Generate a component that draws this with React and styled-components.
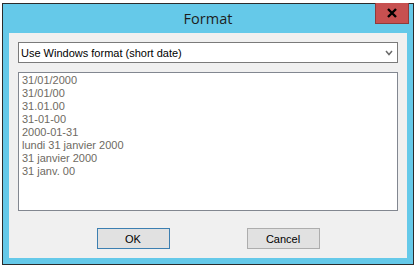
import React from 'react';
import styled, { createGlobalStyle } from 'styled-components';

const GlobalStyle = createGlobalStyle`
    html, body {
        margin: 0;
        padding: 0;
        background: #ffffff;
    }
    body {
        font-family: "Liberation Sans", Arial, sans-serif;
        font-size: 11px;
    }
`;

const Page = styled.div`
    padding: 3px 0 0 2px;
    width: 416px;
    height: 269px;
    box-sizing: border-box;
`;

const Window = styled.div`
    position: relative;
    width: 412px;
    height: 262px;
    box-sizing: border-box;
    border: 1px solid #2b2b2b;
    background: #65c9e9;
    display: flex;
    flex-direction: column;
    padding: 0 6px 6px 6px;
`;

const TitleBar = styled.div`
    height: 29px;
    display: flex;
    align-items: center;
    justify-content: center;
    font-family: "Open Sans", "Noto Sans", sans-serif;
    font-size: 14.5px;
    color: #1e1e1e;
    padding-bottom: 1px;
    box-sizing: border-box;
`;

const CloseButton = styled.div`
    position: absolute;
    top: -1px;
    right: 4px;
    width: 34px;
    height: 21px;
    box-sizing: border-box;
    background: #c75050;
    border: 1px solid #8f3a3a;
    border-top: none;
    display: flex;
    align-items: center;
    justify-content: center;
`;

const Client = styled.div`
    flex: 1;
    background: #f0f0f0;
    padding: 9px 9px 0 9px;
    display: flex;
    flex-direction: column;
`;

const Combo = styled.div`
    height: 21px;
    box-sizing: border-box;
    border: 1px solid #7a7a7a;
    background: #ffffff;
    display: flex;
    align-items: center;
    justify-content: space-between;
    padding: 0 4px 0 2px;
    color: #000000;
`;

const ListBox = styled.div`
    margin-top: 9px;
    height: 139px;
    box-sizing: border-box;
    border: 1px solid #828790;
    background: #ffffff;
    padding: 1px 3px;
`;

const Item = styled.div`
    height: 13px;
    line-height: 13px;
    color: #6e6a62;
    white-space: nowrap;
`;

const ButtonRow = styled.div`
    margin-top: 17px;
    display: flex;
    justify-content: center;
    gap: 77px;
`;

const Button = styled.div`
    width: 73px;
    height: 21px;
    box-sizing: border-box;
    background: #e1e1e1;
    border: 1px solid ${p => (p.$default ? '#3c7fb1' : '#adadad')};
    display: flex;
    align-items: center;
    justify-content: center;
    color: #000000;
`;

const formats = [
    '31/01/2000',
    '31/01/00',
    '31.01.00',
    '31-01-00',
    '2000-01-31',
    'lundi 31 janvier 2000',
    '31 janvier 2000',
    '31 janv. 00',
];

export default function App() {
    return (
        <Page>
            <GlobalStyle />
            <Window>
                <TitleBar>Format</TitleBar>
                <CloseButton>
                    <svg width="12" height="10" viewBox="0 0 12 10">
                        <path d="M2 1 L10 9 M10 1 L2 9" stroke="#000" strokeWidth="2.4" />
                    </svg>
                </CloseButton>
                <Client>
                    <Combo>
                        <span>Use Windows format (short date)</span>
                        <svg width="8" height="6" viewBox="0 0 8 6">
                            <path d="M1 1 L4 4.5 L7 1" stroke="#6a6a6a" strokeWidth="1.5" fill="none" />
                        </svg>
                    </Combo>
                    <ListBox>
                        {formats.map(f => (
                            <Item key={f}>{f}</Item>
                        ))}
                    </ListBox>
                    <ButtonRow>
                        <Button $default>OK</Button>
                        <Button>Cancel</Button>
                    </ButtonRow>
                </Client>
            </Window>
        </Page>
    );
}
